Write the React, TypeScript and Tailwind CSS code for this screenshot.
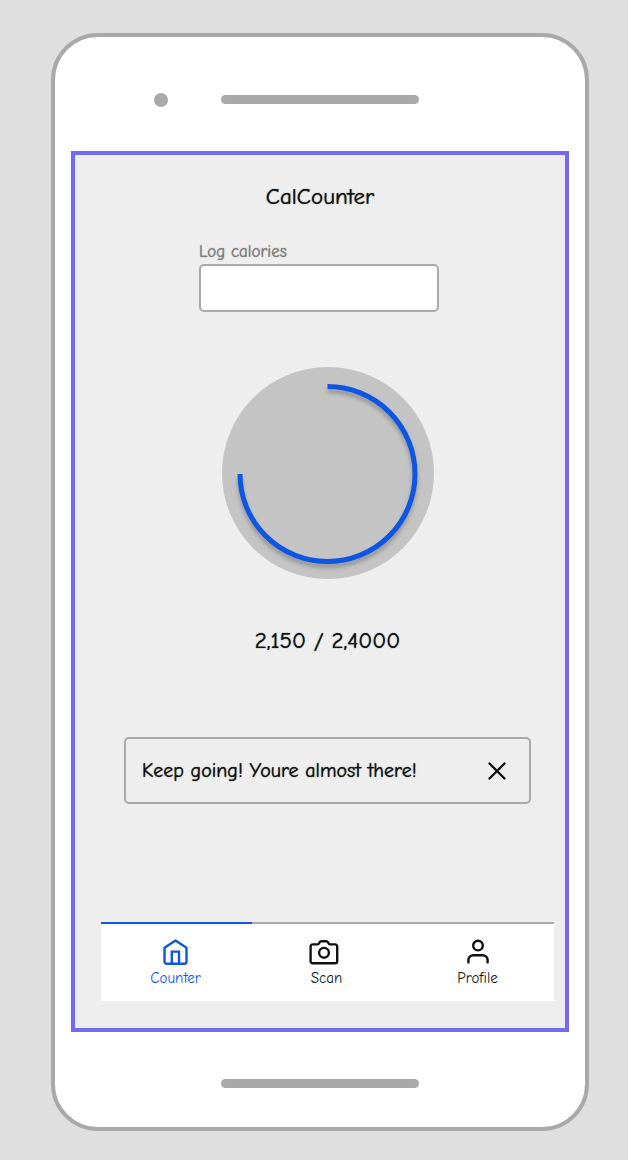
import { useState } from "react";

function HomeIcon() {
  return (
    <svg className="h-7 w-7" viewBox="0 0 28 28" fill="none" stroke="currentColor" strokeWidth="2.4" strokeLinejoin="round" aria-hidden="true">
      <path d="M13.500 2.400 24.500 9.800v13.800a2.200 2.200 0 0 1-2.200 2.200H4.700A2.200 2.200 0 0 1 2.500 23.600V9.800z" />
      <path d="M9.800 25.600V13.600H17v12" strokeLinejoin="miter" />
    </svg>
  );
}

function CameraIcon() {
  return (
    <svg className="mr-1.5 h-7 w-[30px]" viewBox="0 0 30 28" fill="none" stroke="currentColor" strokeWidth="2.4" strokeLinejoin="round" aria-hidden="true">
      <path d="M3.600 6.400h5.100c.9 0 1.100-.5 1.500-1.400.6-1.400 1-1.800 2-1.800h5.200c1 0 1.400.4 2 1.800.4.9.6 1.400 1.500 1.400h5.300a2 2 0 0 1 2 2v14.800a2 2 0 0 1-2 2H3.600a2 2 0 0 1-2-2V8.400a2 2 0 0 1 2-2z" />
      <circle cx="15" cy="14.800" r="4.900" />
    </svg>
  );
}

function PersonIcon() {
  return (
    <svg className="h-7 w-7" viewBox="0 0 28 28" fill="none" stroke="currentColor" strokeWidth="2.4" strokeLinecap="round" aria-hidden="true">
      <circle cx="14" cy="7.600" r="4.800" />
      <path d="M4.400 24.400v-2.200a5 5 0 0 1 5-5h9.200a5 5 0 0 1 5 5v2.200" />
    </svg>
  );
}

const tabs = [
  { name: "Counter", Icon: HomeIcon },
  { name: "Scan", Icon: CameraIcon },
  { name: "Profile", Icon: PersonIcon },
];

function ProgressDial() {
  return (
    <svg className="h-[212px] w-[212px]" viewBox="0 0 212 212" fill="none" role="img" aria-label="Calories progress">
      <defs>
        <filter id="arc-shadow" x="-10%" y="-10%" width="120%" height="125%">
          <feDropShadow dx="0" dy="4" stdDeviation="2" floodColor="#000" floodOpacity="0.25" />
        </filter>
      </defs>
      <circle cx="106" cy="106" r="106" fill="#c4c4c4" />
      <path d="M105.500 19.500a87.500 87.500 0 1 1-87.500 87.500" stroke="#1155e3" strokeWidth="5" filter="url(#arc-shadow)" />
    </svg>
  );
}

export default function App() {
  const [active, setActive] = useState("Counter");
  const [calories, setCalories] = useState("");
  const [noticeOpen, setNoticeOpen] = useState(true);

  return (
    <div className="flex min-h-screen flex-col bg-[#dfdfdf] pt-[33px] pr-[39px] pb-[29px] pl-[51px] font-['Comic_Neue','Lato',sans-serif] font-medium text-[#111] [text-shadow:0_0_1px_currentColor]">
      <div className="flex flex-1 flex-col rounded-[47px] border-4 border-[#a9a9a9] bg-white px-4">
        <div className="grid h-[114px] grid-cols-[1fr_198px_1fr] items-center pt-[11px]">
          <span className="mr-[53px] h-[14px] w-[14px] justify-self-end rounded-full bg-[#a9a9a9]" />
          <span className="h-[9px] rounded-full bg-[#a9a9a9]" />
        </div>

        <main className="flex flex-1 flex-col border-4 border-[#7468f8] bg-[#eee]">
          <h1 className="mt-7 text-center text-[23px] leading-7">CalCounter</h1>

          <div className="mt-[31px] flex justify-center pr-0.5">
            <div className="flex w-60 flex-col">
              <label htmlFor="calories" className="text-[17px] leading-5 text-[#7c7c7c]">
                Log calories
              </label>
              <input
                id="calories"
                inputMode="numeric"
                value={calories}
                onChange={(e) => setCalories(e.target.value)}
                className="mt-0.5 h-12 rounded-[5px] border-2 border-[#a9a9a9] bg-white px-3 text-lg outline-none"
              />
            </div>
          </div>

          <div className="flex flex-1 flex-col pr-[11px] pb-[27px] pl-[26px]">
            <div className="mt-[55px] flex justify-center">
              <ProgressDial />
            </div>
            <p className="mt-12 text-center text-[23px] leading-7">2,150 / 2,4000</p>

            {noticeOpen && (
              <div className="mx-[23px] mt-[82px] flex h-[67px] items-center justify-between rounded-[5px] border-2 border-[#a9a9a9] pr-5 pl-4">
                <p className="text-xl leading-7">Keep going! Youre almost there!</p>
                <button type="button" aria-label="Dismiss" onClick={() => setNoticeOpen(false)}>
                  <svg className="h-6 w-6" viewBox="0 0 24 24" fill="none" stroke="currentColor" strokeWidth="2.4" strokeLinecap="round" aria-hidden="true">
                    <path d="m4.500 4.500 15 15M19.500 4.500l-15 15" />
                  </svg>
                </button>
              </div>
            )}

            <nav className="mt-auto grid h-[79px] grid-cols-3 bg-white">
              {tabs.map(({ name, Icon }) => (
                <button
                  key={name}
                  type="button"
                  aria-current={active === name ? "page" : undefined}
                  onClick={() => setActive(name)}
                  className={
                    active === name
                      ? "flex flex-col items-center border-t-2 border-[#1155e3] pt-3.5 pr-0.5 text-[#1155e3]"
                      : "flex flex-col items-center border-t-2 border-[#a9a9a9] pt-3.5 pr-0.5"
                  }
                >
                  <Icon />
                  <span className="mt-0.5 text-[15px] leading-5">{name}</span>
                </button>
              ))}
            </nav>
          </div>
        </main>

        <div className="flex h-[95px] items-center justify-center pt-2">
          <span className="h-[9px] w-[198px] rounded-full bg-[#a9a9a9]" />
        </div>
      </div>
    </div>
  );
}
